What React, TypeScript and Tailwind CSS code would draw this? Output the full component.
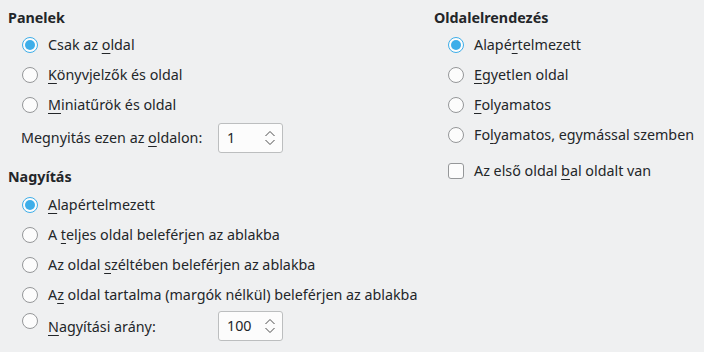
import React from "react";

function Radio({ checked }: { checked?: boolean }) {
  return checked ? (
    <span className="flex h-4 w-4 shrink-0 items-center justify-center rounded-full border border-[#3daee9] bg-[#fcfcfc]">
      <span className="h-[10px] w-[10px] rounded-full bg-[#3daee9]" />
    </span>
  ) : (
    <span className="block h-4 w-4 shrink-0 rounded-full border border-[#959799] bg-[#fcfcfc]" />
  );
}

function Label({ pre, u, post }: { pre?: string; u: string; post?: string }) {
  return (
    <span className="whitespace-pre">
      {pre}
      <span className="underline underline-offset-[3px] decoration-1">{u}</span>
      {post}
    </span>
  );
}

function RadioRow({ checked, children }: { checked?: boolean; children: React.ReactNode }) {
  return (
    <div className="flex h-[30px] items-center gap-[10px] pl-[14px]">
      <Radio checked={checked} />
      {children}
    </div>
  );
}

function SpinBox({ value }: { value: string }) {
  return (
    <div className="flex h-[30px] w-[65px] shrink-0 items-center justify-between rounded-[3px] border border-[#bcbebf] bg-[#fcfcfc] pl-[8px] pr-[6px]">
      <span>{value}</span>
      <svg width="12" height="18" viewBox="0 0 12 18" fill="none" stroke="#4d4d4d" strokeWidth="1">
        <path d="M1.5 7 L6 2.5 L10.5 7" />
        <path d="M1.5 11 L6 15.5 L10.5 11" />
      </svg>
    </div>
  );
}

export default function App() {
  return (
    <div
      className="flex h-[352px] w-[704px] bg-[#eff0f1] text-[14.3px] text-[#232629]"
      style={{ fontFamily: '"Noto Sans", sans-serif' }}
    >
      {/* left column */}
      <div className="flex w-[434px] shrink-0 flex-col pl-[8px] pt-[8px]">
        <div className="flex h-[20px] items-center font-bold">Panelek</div>
        <div className="pt-[2px]">
          <RadioRow checked>
            <Label pre="Csak az " u="o" post="ldal" />
          </RadioRow>
          <RadioRow>
            <Label u="K" post="önyvjelzők és oldal" />
          </RadioRow>
          <RadioRow>
            <Label u="M" post="iniatűrök és oldal" />
          </RadioRow>
        </div>
        <div className="mt-[3px] flex items-center pl-[13px]">
          <span className="w-[197px]">
            <Label pre="Megnyitás ezen az " u="o" post="ldalon:" />
          </span>
          <SpinBox value="1" />
        </div>
        <div className="mt-[14px] flex h-[20px] items-center font-bold">Nagyítás</div>
        <div className="pt-[3px]">
          <RadioRow checked>
            <Label u="A" post="lapértelmezett" />
          </RadioRow>
          <RadioRow>
            <Label pre="A " u="t" post="eljes oldal beleférjen az ablakba" />
          </RadioRow>
          <RadioRow>
            <Label pre="Az oldal " u="s" post="zéltében beleférjen az ablakba" />
          </RadioRow>
          <RadioRow>
            <Label pre="A" u="z" post=" oldal tartalma (margók nélkül) beleférjen az ablakba" />
          </RadioRow>
        </div>
        <div className="mt-[1px] flex items-start gap-[10px] pl-[14px]">
          <span className="mt-[2px] flex">
            <Radio />
          </span>
          <span className="mt-[5px] w-[160px]">
            <Label u="N" post="agyítási arány:" />
          </span>
          <SpinBox value="100" />
        </div>
      </div>

      {/* right column */}
      <div className="flex flex-1 flex-col pt-[8px]">
        <div className="flex h-[20px] items-center font-bold">Oldalelrendezés</div>
        <div className="pt-[2px]">
          <RadioRow checked>
            <Label pre="Alapé" u="r" post="telmezett" />
          </RadioRow>
          <RadioRow>
            <Label u="E" post="gyetlen oldal" />
          </RadioRow>
          <RadioRow>
            <Label u="F" post="olyamatos" />
          </RadioRow>
          <RadioRow>
            <Label pre="Fo" u="l" post="yamatos, egymással szemben" />
          </RadioRow>
        </div>
        <div className="mt-[6px] flex h-[30px] items-center gap-[10px] pl-[14px]">
          <span className="block h-4 w-4 shrink-0 rounded-[3px] border border-[#959799] bg-[#fcfcfc]" />
          <Label pre="Az első oldal " u="b" post="al oldalt van" />
        </div>
      </div>
    </div>
  );
}
